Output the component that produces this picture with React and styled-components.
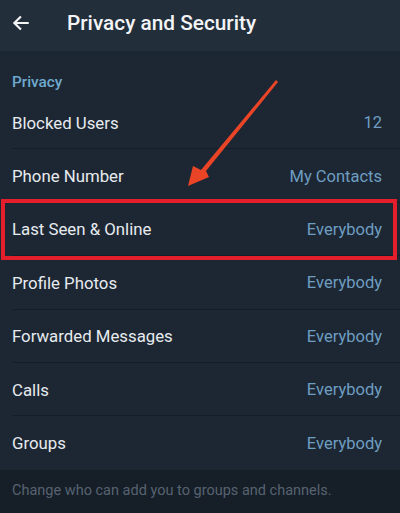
import styled, { createGlobalStyle } from "styled-components";

const GlobalStyle = createGlobalStyle`
  html, body {
    margin: 0;
    padding: 0;
    background: #1d2733;
  }
  * {
    box-sizing: border-box;
  }
`;

const Screen = styled.div`
  position: relative;
  width: 400px;
  height: 513px;
  overflow: hidden;
  background: #1d2733;
  font-family: Roboto, "Noto Sans", sans-serif;
  display: flex;
  flex-direction: column;
`;

const Header = styled.header`
  height: 51px;
  display: flex;
  align-items: center;
  background: #232e3b;
  padding-left: 10px;
  padding-bottom: 6px;
`;

const BackButton = styled.div`
  width: 22px;
  height: 22px;
  display: flex;
  align-items: center;
  justify-content: center;
  margin-right: 35px;
`;

const Title = styled.h1`
  margin: 0;
  font-size: 20.8px;
  font-weight: 500;
  color: #f2f4f6;
`;

const SectionTitle = styled.div`
  height: 45px;
  padding: 22px 12px 0;
  font-size: 15.3px;
  font-weight: 500;
  color: #6fa9cf;
`;

const List = styled.ul`
  list-style: none;
  margin: 0;
  padding: 0;
`;

const Row = styled.li`
  position: relative;
  height: 53.4px;
  display: flex;
  align-items: center;
  justify-content: space-between;
  padding: 0 18px 0 12px;

  &::before {
    content: "";
    position: absolute;
    left: 12px;
    right: 0;
    bottom: 0;
    height: 1px;
    background: ${(p) => (p.$last ? "transparent" : "#151d27")};
  }

  ${(p) =>
    p.$highlight &&
    `
    &::after {
      content: "";
      position: absolute;
      top: -4px;
      bottom: -4px;
      left: 1px;
      right: 3px;
      border: 4px solid #e41f2b;
    }
  `}
`;

const Label = styled.span`
  font-size: 16.8px;
  color: #e7ebef;
`;

const Value = styled.span`
  font-size: 16.5px;
  color: #6e9ec2;
`;

const Footer = styled.div`
  flex: 1;
  background: #161e27;
  padding: 12px 12px 0;
  font-size: 14.5px;
  color: #576371;
`;

const Pointer = styled.svg`
  position: absolute;
  left: 0;
  top: 0;
  pointer-events: none;
`;

const rows = [
  ["Blocked Users", "12"],
  ["Phone Number", "My Contacts"],
  ["Last Seen & Online", "Everybody", true],
  ["Profile Photos", "Everybody"],
  ["Forwarded Messages", "Everybody"],
  ["Calls", "Everybody"],
  ["Groups", "Everybody"],
];

export default function App() {
  return (
    <>
      <GlobalStyle />
      <Screen>
        <Header>
          <BackButton>
            <svg width="20" height="20" viewBox="0 0 24 24" fill="none">
              <path
                d="M20 12H5M11 5l-7 7 7 7"
                stroke="#f2f4f6"
                strokeWidth="2.6"
                strokeLinecap="square"
              />
            </svg>
          </BackButton>
          <Title>Privacy and Security</Title>
        </Header>
        <SectionTitle>Privacy</SectionTitle>
        <List>
          {rows.map(([label, value, hl], i) => (
            <Row key={label} $highlight={hl} $last={i === rows.length - 1}>
              <Label>{label}</Label>
              <Value>{value}</Value>
            </Row>
          ))}
        </List>
        <Footer>Change who can add you to groups and channels.</Footer>
        <Pointer width="400" height="513">
          <polygon
            points="276,80 278,82 206,171 209,177 188,186 193,166 201,170"
            fill="#ea4427"
          />
        </Pointer>
      </Screen>
    </>
  );
}
